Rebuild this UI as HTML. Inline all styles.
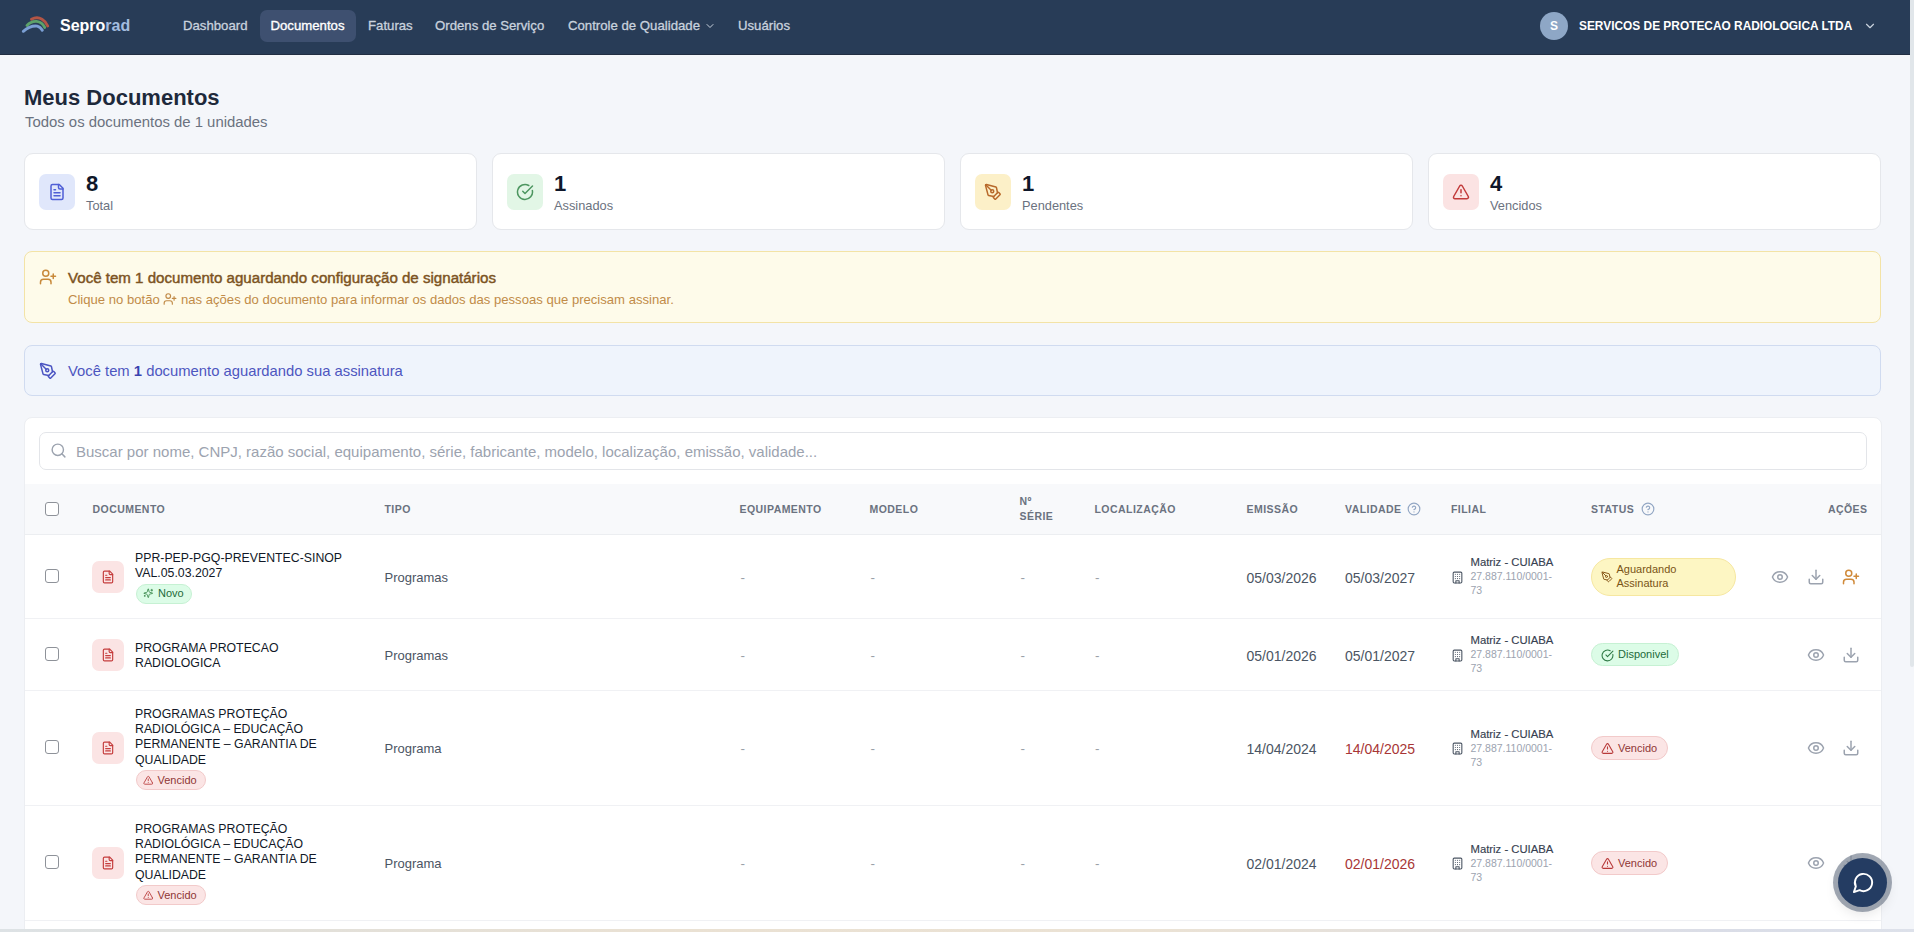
<!DOCTYPE html>
<html><head><meta charset="utf-8">
<style>
*{box-sizing:border-box;margin:0;padding:0}
html,body{width:1914px;height:932px;overflow:hidden}
body{background:#f4f6fa;font-family:"Liberation Sans",sans-serif;color:#111827;position:relative}
.abs{position:absolute}
svg.i{fill:none;stroke:currentColor;stroke-width:2;stroke-linecap:round;stroke-linejoin:round;display:block}
/* nav */
#nav{position:absolute;left:0;top:0;width:1910px;height:55px;background:#283c57;border-bottom:1px solid #212e42}
#nav .brand{position:absolute;left:60px;top:16px;font-size:16px;font-weight:700;color:#fff;line-height:20px}
#nav .brand span{color:#a3bcdf}
.nl{position:absolute;top:10px;height:32px;line-height:32px;font-size:13.2px;color:#c9d2de;white-space:nowrap;-webkit-text-stroke:0.3px #c9d2de}
.nl.act{background:#3e5070;border-radius:7px;color:#fff;-webkit-text-stroke:0.35px #fff}
#scroll{position:absolute;right:0;top:0;width:4px;height:932px;background:#f4f6fa}
#thumb{position:absolute;right:0;top:0;width:4px;height:667px;background:#e1e6ea;border-radius:0 0 2px 2px}
/* header */
h1{position:absolute;left:24px;top:85px;font-size:22px;font-weight:700;color:#1e293b;line-height:26px;white-space:nowrap}
.sub{position:absolute;left:25px;top:113px;font-size:14.9px;color:#6b7280;line-height:18px;white-space:nowrap}
.card{position:absolute;top:153px;width:453px;height:77px;background:#fff;border:1px solid #e5e7eb;border-radius:9px}
.card .ib{position:absolute;left:14px;top:20px;width:36px;height:36px;border-radius:7px}
.card .ib svg{position:absolute;left:9px;top:9px}
.card .num{position:absolute;left:61px;top:18px;font-size:22px;font-weight:700;color:#0f172a;line-height:24px}
.card .lbl{position:absolute;left:61px;top:44px;font-size:12.8px;color:#6b7280;line-height:16px}

.alert{position:absolute;left:24px;width:1857px;border-radius:8px}
#a1{top:251px;height:72px;background:#fefbea;border:1px solid #f3e3a6}
#a2{top:345px;height:51px;background:#eff4fc;border:1px solid #d0dbf0}
.a1t{position:absolute;left:43px;top:16.5px;font-size:15.1px;font-weight:400;-webkit-text-stroke:0.45px #7c5322;color:#7c5322;line-height:18px;white-space:nowrap}
.a1s{position:absolute;left:43px;top:40px;font-size:13.1px;color:#c18b48;line-height:16px;white-space:nowrap}
.a2t{position:absolute;left:43px;top:16px;font-size:14.8px;color:#4d56c0;line-height:18px;white-space:nowrap}
.a2t b{color:#3a43b0}

#tbl{position:absolute;left:24px;top:417px;width:1858px;height:530px;background:#fff;border:1px solid #eceef2;border-radius:8px;overflow:hidden}
#tbl>*{position:absolute}
#search{left:14px;top:14px;width:1828px;height:38px;border:1px solid #e3e5e9;border-radius:7px}
.ph{font-size:15px;color:#9ca3af;line-height:18px;white-space:nowrap}
#thead{left:0;top:66px;width:100%;height:51px;background:#f8f9fb;border-bottom:1px solid #eceef1}
.th{font-size:10.5px;font-weight:700;letter-spacing:0.45px;color:#6b7280;line-height:16px;white-space:nowrap}
.cb{width:14px;height:14px;border:1.5px solid #8e9299;border-radius:3px;background:#fff}
.rowline{left:0;width:100%;height:1px;background:#f0f1f4}
.dib{width:32px;height:32px;border-radius:7px;background:#fbe4e4}
.dn{font-size:12.3px;line-height:15.4px;color:#111827;white-space:nowrap}
.bdg{height:20px;border-radius:10px}
.bdg span{position:absolute;top:3px;font-size:11px;line-height:14px}
.bnovo{background:#dcfce7;border:1px solid #c6f1d3;color:#236b3a}
.bvenc{background:#fbe5e5;border:1px solid #f2caca;color:#8f3535}
.td{font-size:13px;line-height:18px;color:#4b5563;white-space:nowrap}
.td.dt{font-size:14px;color:#4b5563}
.td.red{color:#a83636}
.dash{color:#9aa0a8;font-size:13.5px}
.fil{font-size:10.5px;line-height:14px;color:#9ca3af;white-space:nowrap}
.fil b{color:#374151;font-weight:400;font-size:11.3px;-webkit-text-stroke:0.15px #374151}
.st{border-radius:20px}
.st span{position:absolute;font-size:11px;line-height:14px;white-space:nowrap}
.sag{background:#fdf6c3;border:1px solid #f6e7a0;color:#7a5416}
.sdisp{background:#dcfce7;border:1px solid #c6f1d3;color:#236b3a}
.svenc{background:#fbe5e5;border:1px solid #f2caca;color:#8f3535}

#bstrip{position:absolute;left:0;top:929px;width:1914px;height:3px;background:linear-gradient(90deg,#dde2e5 0%,#e2e0da 15%,#eae1d3 35%,#ebe2d4 60%,#e2e0e0 78%,#dadde7 90%,#dde1ea 100%)}
#fab{position:absolute;left:1838px;top:858px;width:49px;height:49px;border-radius:50%;background:#243c62;box-shadow:0 0 0 5px rgba(128,138,152,.75),0 6px 14px rgba(0,0,0,.12)}
</style></head><body>
<div id="nav">
  <svg class="abs" style="left:18px;top:11.2px" width="36" height="28" viewBox="18 12 36 28">
    <path d="M31.5 20.3 Q37 17.3 42 20.3 Q46 22.8 47.7 27" stroke="#b35545" stroke-width="2.9" fill="none" stroke-linecap="round"/>
    <path d="M27 26.4 Q31 22 36.6 22.4 Q42 23 44.7 28.4" stroke="#5da26a" stroke-width="2.9" fill="none" stroke-linecap="round"/>
    <path d="M23.3 32.3 Q30 26.4 37.2 27.1 Q40.5 27.9 42.3 31.3" stroke="#7b9fd4" stroke-width="2.9" fill="none" stroke-linecap="round"/>
  </svg>
  <div class="brand">Sepro<span>rad</span></div>
  <div class="nl" style="left:183px">Dashboard</div>
  <div class="nl act" style="left:260px;width:96px;padding-left:10.5px">Documentos</div>
  <div class="nl" style="left:368px">Faturas</div>
  <div class="nl" style="left:435px">Ordens de Serviço</div>
  <div class="nl" style="left:568px">Controle de Qualidade</div>
  <svg class="i abs" style="left:704px;top:20px;color:#c9d2de" width="12" height="12" viewBox="0 0 24 24"><path d="m6 9 6 6 6-6"/></svg>
  <div class="nl" style="left:738px">Usuários</div>
  <div class="abs" style="left:1540px;top:12px;width:28px;height:28px;border-radius:50%;background:#8ea7c6;color:#fff;font-size:12px;font-weight:700;text-align:center;line-height:28px">S</div>
  <div class="abs" style="left:1579px;top:18px;font-size:11.9px;font-weight:700;color:#fff;line-height:16px;white-space:nowrap">SERVICOS DE PROTECAO RADIOLOGICA LTDA</div>
  <svg class="i abs" style="left:1863px;top:19px;color:#c9d2de" width="14" height="14" viewBox="0 0 24 24"><path d="m6 9 6 6 6-6"/></svg>
</div>
<div id="scroll"><div id="thumb"></div></div>

<h1>Meus Documentos</h1>
<div class="sub">Todos os documentos de 1 unidades</div>

<div class="card" style="left:24px">
  <div class="ib" style="background:#e0e7fb"><svg class="i" style="color:#4f5fd6" width="18" height="18" viewBox="0 0 24 24"><path d="M15 2H6a2 2 0 0 0-2 2v16a2 2 0 0 0 2 2h12a2 2 0 0 0 2-2V7Z"/><path d="M14 2v4a2 2 0 0 0 2 2h4"/><path d="M10 9H8"/><path d="M16 13H8"/><path d="M16 17H8"/></svg></div>
  <div class="num">8</div><div class="lbl">Total</div>
</div>
<div class="card" style="left:492px">
  <div class="ib" style="background:#e2f6e6"><svg class="i" style="color:#4d9660" width="18" height="18" viewBox="0 0 24 24"><path d="M21.801 10A10 10 0 1 1 17 3.335"/><path d="m9 11 3 3L22 4"/></svg></div>
  <div class="num">1</div><div class="lbl">Assinados</div>
</div>
<div class="card" style="left:960px">
  <div class="ib" style="background:#fcf0c8"><svg class="i" style="color:#b8692a" width="18" height="18" viewBox="0 0 24 24"><path d="M15.707 21.293a1 1 0 0 1-1.414 0l-1.586-1.586a1 1 0 0 1 0-1.414l5.586-5.586a1 1 0 0 1 1.414 0l1.586 1.586a1 1 0 0 1 0 1.414z"/><path d="m18 13-1.375-6.874a1 1 0 0 0-.746-.776L3.235 2.028a1 1 0 0 0-1.207 1.207L5.35 15.879a1 1 0 0 0 .776.746L13 18"/><path d="m2.3 2.3 7.286 7.286"/><circle cx="11" cy="11" r="2"/></svg></div>
  <div class="num">1</div><div class="lbl">Pendentes</div>
</div>
<div class="card" style="left:1428px">
  <div class="ib" style="background:#fbe3e3"><svg class="i" style="color:#c23a3a" width="18" height="18" viewBox="0 0 24 24"><path d="m21.73 18-8-14a2 2 0 0 0-3.48 0l-8 14A2 2 0 0 0 4 21h16a2 2 0 0 0 1.73-3"/><path d="M12 9v4"/><path d="M12 17h.01"/></svg></div>
  <div class="num">4</div><div class="lbl">Vencidos</div>
</div>

<div class="alert" id="a1">
  <svg class="i abs" style="left:13.5px;top:15.5px;color:#c8893a" width="18" height="18" viewBox="0 0 24 24"><path d="M16 21v-2a4 4 0 0 0-4-4H6a4 4 0 0 0-4 4v2"/><circle cx="9" cy="7" r="4"/><line x1="19" x2="19" y1="8" y2="14"/><line x1="22" x2="16" y1="11" y2="11"/></svg>
  <div class="a1t">Você tem 1 documento aguardando configuração de signatários</div>
  <div class="a1s">Clique no botão <svg class="i" style="display:inline-block;vertical-align:-2px;color:#c18b48" width="14" height="14" viewBox="0 0 24 24"><path d="M16 21v-2a4 4 0 0 0-4-4H6a4 4 0 0 0-4 4v2"/><circle cx="9" cy="7" r="4"/><line x1="19" x2="19" y1="8" y2="14"/><line x1="22" x2="16" y1="11" y2="11"/></svg> nas ações do documento para informar os dados das pessoas que precisam assinar.</div>
</div>
<div class="alert" id="a2">
  <svg class="i abs" style="left:13.8px;top:16px;color:#4c55c2" width="18" height="18" viewBox="0 0 24 24"><path d="M15.707 21.293a1 1 0 0 1-1.414 0l-1.586-1.586a1 1 0 0 1 0-1.414l5.586-5.586a1 1 0 0 1 1.414 0l1.586 1.586a1 1 0 0 1 0 1.414z"/><path d="m18 13-1.375-6.874a1 1 0 0 0-.746-.776L3.235 2.028a1 1 0 0 0-1.207 1.207L5.35 15.879a1 1 0 0 0 .776.746L13 18"/><path d="m2.3 2.3 7.286 7.286"/><circle cx="11" cy="11" r="2"/></svg>
  <div class="a2t">Você tem <b>1</b> documento aguardando sua assinatura</div>
</div>
<div id="tbl">
<div id="search"></div>
<svg class="i abs" style="left:25.3px;top:23.8px;color:#9ca3af" width="17" height="17" viewBox="0 0 24 24" stroke-width="2"><circle cx="11" cy="11" r="8"/><path d="m21 21-4.3-4.3"/></svg>
<div class="ph" style="left:51px;top:25px">Buscar por nome, CNPJ, razão social, equipamento, série, fabricante, modelo, localização, emissão, validade...</div>
<div id="thead"></div>
<div class="cb" style="left:20px;top:84px"></div>
<div class="th" style="left:67.5px;top:83px">DOCUMENTO</div>
<div class="th" style="left:359.5px;top:83px">TIPO</div>
<div class="th" style="left:714.5px;top:83px">EQUIPAMENTO</div>
<div class="th" style="left:844.5px;top:83px">MODELO</div>
<div class="th" style="left:994.5px;top:76px;line-height:15px">Nº<br>SÉRIE</div>
<div class="th" style="left:1069.5px;top:83px">LOCALIZAÇÃO</div>
<div class="th" style="left:1221.5px;top:83px">EMISSÃO</div>
<div class="th" style="left:1320px;top:83px">VALIDADE</div>
<div class="th" style="left:1426px;top:83px">FILIAL</div>
<div class="th" style="left:1566px;top:83px">STATUS</div>
<svg class="i abs" style="left:1382px;top:84px;color:#93a7c4" width="14" height="14" viewBox="0 0 24 24" stroke-width="2"><circle cx="12" cy="12" r="10"/><path d="M9.09 9a3 3 0 0 1 5.83 1c0 2-3 3-3 3"/><path d="M12 17h.01"/></svg>
<svg class="i abs" style="left:1616px;top:84px;color:#93a7c4" width="14" height="14" viewBox="0 0 24 24" stroke-width="2"><circle cx="12" cy="12" r="10"/><path d="M9.09 9a3 3 0 0 1 5.83 1c0 2-3 3-3 3"/><path d="M12 17h.01"/></svg>
<div class="th" style="right:13.5px;top:83px">AÇÕES</div>
<div class="rowline" style="top:200px"></div>
<div class="cb" style="left:20px;top:150.5px"></div>
<div class="dib" style="left:67px;top:142.5px"><svg class="i" style="position:absolute;left:9px;top:9px;color:#c53d3d" width="14" height="14" viewBox="0 0 24 24"><path d="M15 2H6a2 2 0 0 0-2 2v16a2 2 0 0 0 2 2h12a2 2 0 0 0 2-2V7Z"/><path d="M14 2v4a2 2 0 0 0 2 2h4"/><path d="M10 9H8"/><path d="M16 13H8"/><path d="M16 17H8"/></svg></div>
<div class="dn" style="left:110px;top:132.5px">PPR-PEP-PGQ-PREVENTEC-SINOP<br>VAL.05.03.2027</div>
<div class="bdg bnovo" style="left:110.5px;top:165.5px;width:56px"><svg class="i abs" style="left:6.2px;top:3px;color:#3d8a4e" width="10.5" height="10.5" viewBox="0 0 24 24" stroke-width="2"><path d="M9.937 15.5A2 2 0 0 0 8.5 14.063l-6.135-1.582a.5.5 0 0 1 0-.962L8.5 9.936A2 2 0 0 0 9.937 8.5l1.582-6.135a.5.5 0 0 1 .963 0L14.063 8.5A2 2 0 0 0 15.5 9.937l6.135 1.581a.5.5 0 0 1 0 .964L15.5 14.063a2 2 0 0 0-1.437 1.437l-1.582 6.135a.5.5 0 0 1-.963 0z"/><path d="M20 3v4"/><path d="M22 5h-4"/><path d="M4 17v2"/><path d="M5 18H3"/></svg><span style="left:21.5px;top:1.5px">Novo</span></div>
<div class="td" style="left:359.5px;top:150.5px">Programas</div>
<div class="td dash" style="left:715.5px;top:150.5px">-</div>
<div class="td dash" style="left:845.5px;top:150.5px">-</div>
<div class="td dash" style="left:995.5px;top:150.5px">-</div>
<div class="td dash" style="left:1070px;top:150.5px">-</div>
<div class="td dt" style="left:1221.5px;top:150.5px">05/03/2026</div>
<div class="td dt" style="left:1320px;top:150.5px">05/03/2027</div>
<svg class="i abs" style="left:1426px;top:152.5px;color:#4b5563" width="13" height="13" viewBox="0 0 24 24" stroke-width="2"><rect width="16" height="20" x="4" y="2" rx="2" ry="2"/><path d="M9 22v-4h6v4"/><path d="M8 6h.01"/><path d="M16 6h.01"/><path d="M12 6h.01"/><path d="M12 10h.01"/><path d="M12 14h.01"/><path d="M16 10h.01"/><path d="M16 14h.01"/><path d="M8 10h.01"/><path d="M8 14h.01"/></svg>
<div class="fil" style="left:1445.5px;top:137.0px"><b>Matriz - CUIABA</b><br>27.887.110/0001-<br>73</div>
<div class="st sag" style="left:1566px;top:139.5px;width:145px;height:38px"><svg class="i abs" style="left:9px;top:12.5px;color:#8a5a1c" width="12" height="12" viewBox="0 0 24 24" stroke-width="2"><path d="M15.707 21.293a1 1 0 0 1-1.414 0l-1.586-1.586a1 1 0 0 1 0-1.414l5.586-5.586a1 1 0 0 1 1.414 0l1.586 1.586a1 1 0 0 1 0 1.414z"/><path d="m18 13-1.375-6.874a1 1 0 0 0-.746-.776L3.235 2.028a1 1 0 0 0-1.207 1.207L5.35 15.879a1 1 0 0 0 .776.746L13 18"/><path d="m2.3 2.3 7.286 7.286"/><circle cx="11" cy="11" r="2"/></svg><span style="left:24.5px;top:3.3px;line-height:14px">Aguardando<br>Assinatura</span></div>
<svg class="i abs" style="left:1746px;top:149.5px;color:#9ca3af" width="18" height="18" viewBox="0 0 24 24" stroke-width="2"><path d="M2.062 12.348a1 1 0 0 1 0-.696 10.75 10.75 0 0 1 19.876 0 1 1 0 0 1 0 .696 10.75 10.75 0 0 1-19.876 0"/><circle cx="12" cy="12" r="3"/></svg>
<svg class="i abs" style="left:1781.5px;top:149.5px;color:#9ca3af" width="18" height="18" viewBox="0 0 24 24" stroke-width="2"><path d="M21 15v4a2 2 0 0 1-2 2H5a2 2 0 0 1-2-2v-4"/><polyline points="7 10 12 15 17 10"/><line x1="12" x2="12" y1="15" y2="3"/></svg>
<svg class="i abs" style="left:1816.5px;top:149.5px;color:#d08a3a" width="18" height="18" viewBox="0 0 24 24" stroke-width="2"><path d="M16 21v-2a4 4 0 0 0-4-4H6a4 4 0 0 0-4 4v2"/><circle cx="9" cy="7" r="4"/><line x1="19" x2="19" y1="8" y2="14"/><line x1="22" x2="16" y1="11" y2="11"/></svg>
<div class="rowline" style="top:272px"></div>
<div class="cb" style="left:20px;top:228.5px"></div>
<div class="dib" style="left:67px;top:220.5px"><svg class="i" style="position:absolute;left:9px;top:9px;color:#c53d3d" width="14" height="14" viewBox="0 0 24 24"><path d="M15 2H6a2 2 0 0 0-2 2v16a2 2 0 0 0 2 2h12a2 2 0 0 0 2-2V7Z"/><path d="M14 2v4a2 2 0 0 0 2 2h4"/><path d="M10 9H8"/><path d="M16 13H8"/><path d="M16 17H8"/></svg></div>
<div class="dn" style="left:110px;top:222.7px">PROGRAMA PROTECAO<br>RADIOLOGICA</div>
<div class="td" style="left:359.5px;top:228.5px">Programas</div>
<div class="td dash" style="left:715.5px;top:228.5px">-</div>
<div class="td dash" style="left:845.5px;top:228.5px">-</div>
<div class="td dash" style="left:995.5px;top:228.5px">-</div>
<div class="td dash" style="left:1070px;top:228.5px">-</div>
<div class="td dt" style="left:1221.5px;top:228.5px">05/01/2026</div>
<div class="td dt" style="left:1320px;top:228.5px">05/01/2027</div>
<svg class="i abs" style="left:1426px;top:230.5px;color:#4b5563" width="13" height="13" viewBox="0 0 24 24" stroke-width="2"><rect width="16" height="20" x="4" y="2" rx="2" ry="2"/><path d="M9 22v-4h6v4"/><path d="M8 6h.01"/><path d="M16 6h.01"/><path d="M12 6h.01"/><path d="M12 10h.01"/><path d="M12 14h.01"/><path d="M16 10h.01"/><path d="M16 14h.01"/><path d="M8 10h.01"/><path d="M8 14h.01"/></svg>
<div class="fil" style="left:1445.5px;top:215.0px"><b>Matriz - CUIABA</b><br>27.887.110/0001-<br>73</div>
<div class="st sdisp" style="left:1566px;top:225.0px;width:88px;height:23px"><svg class="i abs" style="left:9px;top:5px;color:#2f7a45" width="13" height="13" viewBox="0 0 24 24" stroke-width="2"><path d="M21.801 10A10 10 0 1 1 17 3.335"/><path d="m9 11 3 3L22 4"/></svg><span style="left:26px;top:2.7px">Disponivel</span></div>
<svg class="i abs" style="left:1781.5px;top:227.5px;color:#9ca3af" width="18" height="18" viewBox="0 0 24 24" stroke-width="2"><path d="M2.062 12.348a1 1 0 0 1 0-.696 10.75 10.75 0 0 1 19.876 0 1 1 0 0 1 0 .696 10.75 10.75 0 0 1-19.876 0"/><circle cx="12" cy="12" r="3"/></svg>
<svg class="i abs" style="left:1816.5px;top:227.5px;color:#9ca3af" width="18" height="18" viewBox="0 0 24 24" stroke-width="2"><path d="M21 15v4a2 2 0 0 1-2 2H5a2 2 0 0 1-2-2v-4"/><polyline points="7 10 12 15 17 10"/><line x1="12" x2="12" y1="15" y2="3"/></svg>
<div class="rowline" style="top:387px"></div>
<div class="cb" style="left:20px;top:322.0px"></div>
<div class="dib" style="left:67px;top:314.0px"><svg class="i" style="position:absolute;left:9px;top:9px;color:#c53d3d" width="14" height="14" viewBox="0 0 24 24"><path d="M15 2H6a2 2 0 0 0-2 2v16a2 2 0 0 0 2 2h12a2 2 0 0 0 2-2V7Z"/><path d="M14 2v4a2 2 0 0 0 2 2h4"/><path d="M10 9H8"/><path d="M16 13H8"/><path d="M16 17H8"/></svg></div>
<div class="dn" style="left:110px;top:288.6px">PROGRAMAS PROTEÇÃO<br>RADIOLÓGICA – EDUCAÇÃO<br>PERMANENTE – GARANTIA DE<br>QUALIDADE</div>
<div class="bdg bvenc" style="left:110.5px;top:352.0px;width:70px"><svg class="i abs" style="left:6px;top:4px;color:#b83a3a" width="10.5" height="10.5" viewBox="0 0 24 24" stroke-width="2"><path d="m21.73 18-8-14a2 2 0 0 0-3.48 0l-8 14A2 2 0 0 0 4 21h16a2 2 0 0 0 1.73-3"/><path d="M12 9v4"/><path d="M12 17h.01"/></svg><span style="left:21px;top:1.5px">Vencido</span></div>
<div class="td" style="left:359.5px;top:322.0px">Programa</div>
<div class="td dash" style="left:715.5px;top:322.0px">-</div>
<div class="td dash" style="left:845.5px;top:322.0px">-</div>
<div class="td dash" style="left:995.5px;top:322.0px">-</div>
<div class="td dash" style="left:1070px;top:322.0px">-</div>
<div class="td dt" style="left:1221.5px;top:322.0px">14/04/2024</div>
<div class="td dt red" style="left:1320px;top:322.0px">14/04/2025</div>
<svg class="i abs" style="left:1426px;top:324.0px;color:#4b5563" width="13" height="13" viewBox="0 0 24 24" stroke-width="2"><rect width="16" height="20" x="4" y="2" rx="2" ry="2"/><path d="M9 22v-4h6v4"/><path d="M8 6h.01"/><path d="M16 6h.01"/><path d="M12 6h.01"/><path d="M12 10h.01"/><path d="M12 14h.01"/><path d="M16 10h.01"/><path d="M16 14h.01"/><path d="M8 10h.01"/><path d="M8 14h.01"/></svg>
<div class="fil" style="left:1445.5px;top:308.5px"><b>Matriz - CUIABA</b><br>27.887.110/0001-<br>73</div>
<div class="st svenc" style="left:1566px;top:318.0px;width:77px;height:24px"><svg class="i abs" style="left:9px;top:5px;color:#b83a3a" width="13" height="13" viewBox="0 0 24 24" stroke-width="2"><path d="m21.73 18-8-14a2 2 0 0 0-3.48 0l-8 14A2 2 0 0 0 4 21h16a2 2 0 0 0 1.73-3"/><path d="M12 9v4"/><path d="M12 17h.01"/></svg><span style="left:26px;top:3.5px">Vencido</span></div>
<svg class="i abs" style="left:1781.5px;top:321.0px;color:#9ca3af" width="18" height="18" viewBox="0 0 24 24" stroke-width="2"><path d="M2.062 12.348a1 1 0 0 1 0-.696 10.75 10.75 0 0 1 19.876 0 1 1 0 0 1 0 .696 10.75 10.75 0 0 1-19.876 0"/><circle cx="12" cy="12" r="3"/></svg>
<svg class="i abs" style="left:1816.5px;top:321.0px;color:#9ca3af" width="18" height="18" viewBox="0 0 24 24" stroke-width="2"><path d="M21 15v4a2 2 0 0 1-2 2H5a2 2 0 0 1-2-2v-4"/><polyline points="7 10 12 15 17 10"/><line x1="12" x2="12" y1="15" y2="3"/></svg>
<div class="rowline" style="top:502px"></div>
<div class="cb" style="left:20px;top:437.0px"></div>
<div class="dib" style="left:67px;top:429.0px"><svg class="i" style="position:absolute;left:9px;top:9px;color:#c53d3d" width="14" height="14" viewBox="0 0 24 24"><path d="M15 2H6a2 2 0 0 0-2 2v16a2 2 0 0 0 2 2h12a2 2 0 0 0 2-2V7Z"/><path d="M14 2v4a2 2 0 0 0 2 2h4"/><path d="M10 9H8"/><path d="M16 13H8"/><path d="M16 17H8"/></svg></div>
<div class="dn" style="left:110px;top:403.6px">PROGRAMAS PROTEÇÃO<br>RADIOLÓGICA – EDUCAÇÃO<br>PERMANENTE – GARANTIA DE<br>QUALIDADE</div>
<div class="bdg bvenc" style="left:110.5px;top:467.0px;width:70px"><svg class="i abs" style="left:6px;top:4px;color:#b83a3a" width="10.5" height="10.5" viewBox="0 0 24 24" stroke-width="2"><path d="m21.73 18-8-14a2 2 0 0 0-3.48 0l-8 14A2 2 0 0 0 4 21h16a2 2 0 0 0 1.73-3"/><path d="M12 9v4"/><path d="M12 17h.01"/></svg><span style="left:21px;top:1.5px">Vencido</span></div>
<div class="td" style="left:359.5px;top:437.0px">Programa</div>
<div class="td dash" style="left:715.5px;top:437.0px">-</div>
<div class="td dash" style="left:845.5px;top:437.0px">-</div>
<div class="td dash" style="left:995.5px;top:437.0px">-</div>
<div class="td dash" style="left:1070px;top:437.0px">-</div>
<div class="td dt" style="left:1221.5px;top:437.0px">02/01/2024</div>
<div class="td dt red" style="left:1320px;top:437.0px">02/01/2026</div>
<svg class="i abs" style="left:1426px;top:439.0px;color:#4b5563" width="13" height="13" viewBox="0 0 24 24" stroke-width="2"><rect width="16" height="20" x="4" y="2" rx="2" ry="2"/><path d="M9 22v-4h6v4"/><path d="M8 6h.01"/><path d="M16 6h.01"/><path d="M12 6h.01"/><path d="M12 10h.01"/><path d="M12 14h.01"/><path d="M16 10h.01"/><path d="M16 14h.01"/><path d="M8 10h.01"/><path d="M8 14h.01"/></svg>
<div class="fil" style="left:1445.5px;top:423.5px"><b>Matriz - CUIABA</b><br>27.887.110/0001-<br>73</div>
<div class="st svenc" style="left:1566px;top:433.0px;width:77px;height:24px"><svg class="i abs" style="left:9px;top:5px;color:#b83a3a" width="13" height="13" viewBox="0 0 24 24" stroke-width="2"><path d="m21.73 18-8-14a2 2 0 0 0-3.48 0l-8 14A2 2 0 0 0 4 21h16a2 2 0 0 0 1.73-3"/><path d="M12 9v4"/><path d="M12 17h.01"/></svg><span style="left:26px;top:3.5px">Vencido</span></div>
<svg class="i abs" style="left:1781.5px;top:436.0px;color:#9ca3af" width="18" height="18" viewBox="0 0 24 24" stroke-width="2"><path d="M2.062 12.348a1 1 0 0 1 0-.696 10.75 10.75 0 0 1 19.876 0 1 1 0 0 1 0 .696 10.75 10.75 0 0 1-19.876 0"/><circle cx="12" cy="12" r="3"/></svg>
<svg class="i abs" style="left:1816.5px;top:436.0px;color:#9ca3af" width="18" height="18" viewBox="0 0 24 24" stroke-width="2"><path d="M21 15v4a2 2 0 0 1-2 2H5a2 2 0 0 1-2-2v-4"/><polyline points="7 10 12 15 17 10"/><line x1="12" x2="12" y1="15" y2="3"/></svg>
</div>
<div id="bstrip"></div>
<div id="fab"><svg class="i" style="position:absolute;left:13.5px;top:13px;color:#fff" width="23" height="23" viewBox="0 0 24 24" stroke-width="2.2"><path d="M7.9 20A9 9 0 1 0 4 16.1L2 22Z"/></svg></div>
</body></html>
